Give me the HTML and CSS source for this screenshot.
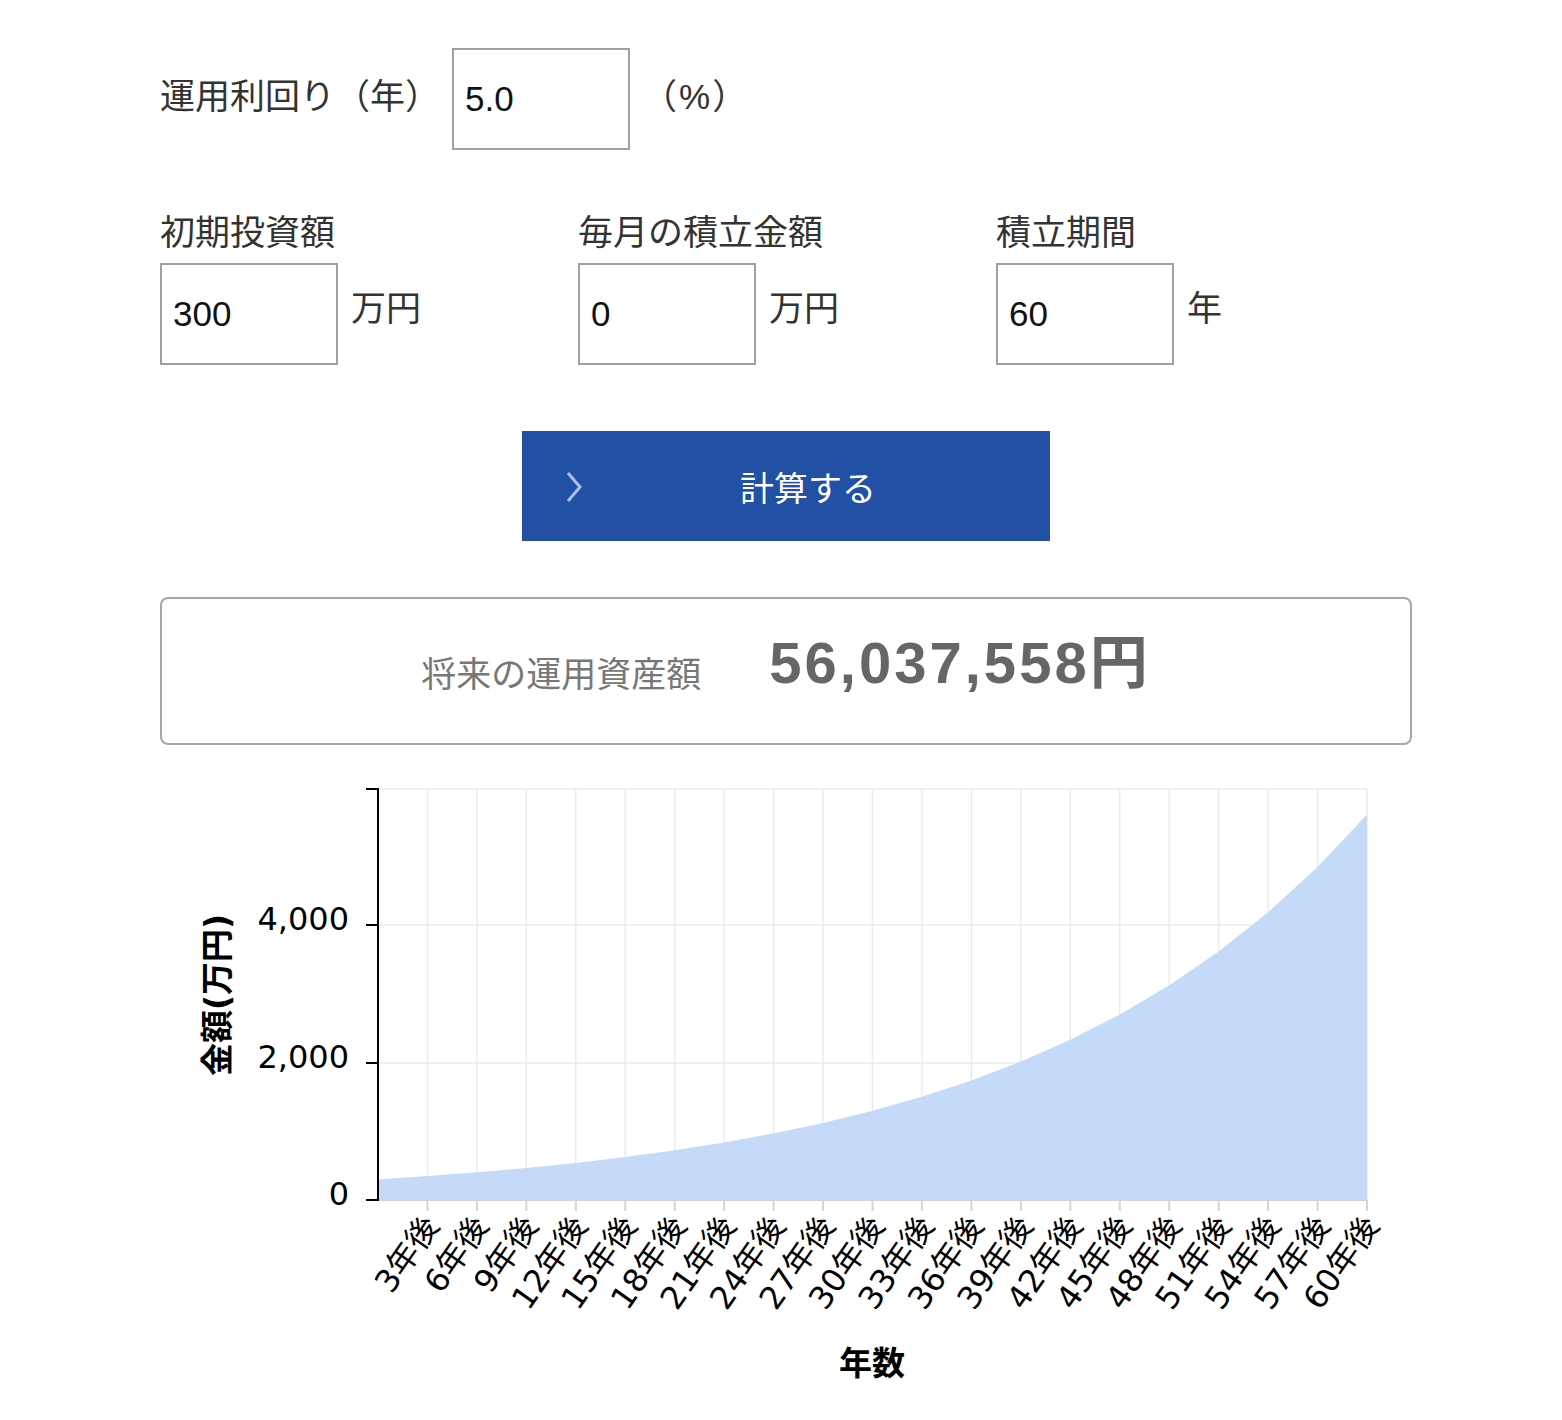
FILE: index.html
```html
<!DOCTYPE html>
<html lang="ja">
  <head>
    <meta charset="UTF-8" />
    <meta name="viewport" content="width=device-width, initial-scale=1.0" />
    <title>積立シミュレーション</title>
    <link rel="stylesheet" href="styles.css">
  </head>

  <body>
    <main class="simulator">
      <div class="rate-row">
        <label class="field-label" for="rate">運用利回り（年）</label>
        <input class="num-input" id="rate" type="text" value="5.0">
        <span class="unit unit-rate">（%）</span>
      </div>

      <div class="fields">
        <div class="field">
          <label class="field-label" for="initial">初期投資額</label>
          <div class="field-body">
            <input class="num-input" id="initial" type="text" value="300">
            <span class="unit">万円</span>
          </div>
        </div>
        <div class="field">
          <label class="field-label" for="monthly">毎月の積立金額</label>
          <div class="field-body">
            <input class="num-input" id="monthly" type="text" value="0">
            <span class="unit">万円</span>
          </div>
        </div>
        <div class="field">
          <label class="field-label" for="years">積立期間</label>
          <div class="field-body">
            <input class="num-input" id="years" type="text" value="60">
            <span class="unit">年</span>
          </div>
        </div>
      </div>

      <div class="actions">
        <button class="calc-btn" type="button">
          <svg class="calc-chevron" width="18" height="32" viewBox="0 0 18 32">
            <path d="M3 2 L15 16 L3 30" fill="none" stroke="currentColor" stroke-width="3" />
          </svg>
          計算する
        </button>
      </div>

      <div class="result">
        <span class="result-label">将来の運用資産額</span>
        <span class="result-value">56,037,558円</span>
      </div>

      <!-- chart: viewBox uses page coordinates -->
      <svg class="chart" width="1252" height="640" viewBox="160 770 1252 640">
        <g class="grid">
          <line x1="378" y1="789" x2="1367" y2="789" />
          <line x1="378" y1="925" x2="1367" y2="925" />
          <line x1="378" y1="1063" x2="1367" y2="1063" />
          <line x1="427.45" y1="789" x2="427.45" y2="1200" />
          <line x1="476.9" y1="789" x2="476.9" y2="1200" />
          <line x1="526.35" y1="789" x2="526.35" y2="1200" />
          <line x1="575.8" y1="789" x2="575.8" y2="1200" />
          <line x1="625.25" y1="789" x2="625.25" y2="1200" />
          <line x1="674.7" y1="789" x2="674.7" y2="1200" />
          <line x1="724.15" y1="789" x2="724.15" y2="1200" />
          <line x1="773.6" y1="789" x2="773.6" y2="1200" />
          <line x1="823.05" y1="789" x2="823.05" y2="1200" />
          <line x1="872.5" y1="789" x2="872.5" y2="1200" />
          <line x1="921.95" y1="789" x2="921.95" y2="1200" />
          <line x1="971.4" y1="789" x2="971.4" y2="1200" />
          <line x1="1020.85" y1="789" x2="1020.85" y2="1200" />
          <line x1="1070.3" y1="789" x2="1070.3" y2="1200" />
          <line x1="1119.75" y1="789" x2="1119.75" y2="1200" />
          <line x1="1169.2" y1="789" x2="1169.2" y2="1200" />
          <line x1="1218.65" y1="789" x2="1218.65" y2="1200" />
          <line x1="1268.1" y1="789" x2="1268.1" y2="1200" />
          <line x1="1317.55" y1="789" x2="1317.55" y2="1200" />
          <line x1="1367" y1="789" x2="1367" y2="1200" />
        </g>

        <path class="area" d="M378,1200 L378,1179.4 L427.45,1176.1 L476.9,1172.3 L526.35,1168 L575.8,1162.9 L625.25,1157.1 L674.7,1150.3 L724.15,1142.5 L773.6,1133.4 L823.05,1122.9 L872.5,1110.8 L921.95,1096.7 L971.4,1080.5 L1020.85,1061.6 L1070.3,1039.8 L1119.75,1014.5 L1169.2,985.3 L1218.65,951.5 L1268.1,912.3 L1317.55,867 L1367,814.5 L1367,1200 Z" />

        <g class="x-axis">
          <line x1="378" y1="1200" x2="1367" y2="1200" />
          <line x1="427.45" y1="1200" x2="427.45" y2="1211" />
          <line x1="476.9" y1="1200" x2="476.9" y2="1211" />
          <line x1="526.35" y1="1200" x2="526.35" y2="1211" />
          <line x1="575.8" y1="1200" x2="575.8" y2="1211" />
          <line x1="625.25" y1="1200" x2="625.25" y2="1211" />
          <line x1="674.7" y1="1200" x2="674.7" y2="1211" />
          <line x1="724.15" y1="1200" x2="724.15" y2="1211" />
          <line x1="773.6" y1="1200" x2="773.6" y2="1211" />
          <line x1="823.05" y1="1200" x2="823.05" y2="1211" />
          <line x1="872.5" y1="1200" x2="872.5" y2="1211" />
          <line x1="921.95" y1="1200" x2="921.95" y2="1211" />
          <line x1="971.4" y1="1200" x2="971.4" y2="1211" />
          <line x1="1020.85" y1="1200" x2="1020.85" y2="1211" />
          <line x1="1070.3" y1="1200" x2="1070.3" y2="1211" />
          <line x1="1119.75" y1="1200" x2="1119.75" y2="1211" />
          <line x1="1169.2" y1="1200" x2="1169.2" y2="1211" />
          <line x1="1218.65" y1="1200" x2="1218.65" y2="1211" />
          <line x1="1268.1" y1="1200" x2="1268.1" y2="1211" />
          <line x1="1317.55" y1="1200" x2="1317.55" y2="1211" />
          <line x1="1367" y1="1200" x2="1367" y2="1211" />
        </g>

        <g class="x-labels">
          <text transform="translate(440,1226) rotate(-55)">3年後</text>
          <text transform="translate(489.5,1226) rotate(-55)">6年後</text>
          <text transform="translate(539,1226) rotate(-55)">9年後</text>
          <text transform="translate(588.5,1226) rotate(-55)">12年後</text>
          <text transform="translate(638,1226) rotate(-55)">15年後</text>
          <text transform="translate(687.5,1226) rotate(-55)">18年後</text>
          <text transform="translate(737,1226) rotate(-55)">21年後</text>
          <text transform="translate(786.5,1226) rotate(-55)">24年後</text>
          <text transform="translate(836,1226) rotate(-55)">27年後</text>
          <text transform="translate(885.5,1226) rotate(-55)">30年後</text>
          <text transform="translate(935,1226) rotate(-55)">33年後</text>
          <text transform="translate(984.5,1226) rotate(-55)">36年後</text>
          <text transform="translate(1034,1226) rotate(-55)">39年後</text>
          <text transform="translate(1083.5,1226) rotate(-55)">42年後</text>
          <text transform="translate(1133,1226) rotate(-55)">45年後</text>
          <text transform="translate(1182.5,1226) rotate(-55)">48年後</text>
          <text transform="translate(1232,1226) rotate(-55)">51年後</text>
          <text transform="translate(1281.5,1226) rotate(-55)">54年後</text>
          <text transform="translate(1331,1226) rotate(-55)">57年後</text>
          <text transform="translate(1380,1226) rotate(-55)">60年後</text>
        </g>

        <g class="y-axis">
          <path d="M366,789 H378 V1200 H366" />
          <line x1="366" y1="925" x2="378" y2="925" />
          <line x1="366" y1="1063" x2="378" y2="1063" />
        </g>

        <g class="y-labels">
          <text x="349" y="930">4,000</text>
          <text x="349" y="1068">2,000</text>
          <text x="349" y="1205">0</text>
        </g>

        <text class="axis-title" transform="translate(229,995) rotate(-90)">金額(万円)</text>
        <text class="axis-title" x="872" y="1375">年数</text>
      </svg>
    </main>
  </body>
</html>
```

FILE: styles.css
```css
* {
  margin: 0;
  padding: 0;
  box-sizing: border-box;
}
body {
  background: #fff;
  color: #333;
  font-family: "Liberation Sans", "Noto Sans CJK JP", sans-serif;
}

.simulator {
  width: 1252px;
  margin-left: 160px;
  padding-top: 48px;
}

.field-label {
  font-size: 35px;
  line-height: 40px;
  color: #333;
}

.num-input {
  width: 178px;
  height: 102px;
  padding: 0 11px;
  border: 2px solid #a0a0a0;
  border-radius: 0;
  background: #fff;
  color: #111;
  font-family: "Liberation Sans", sans-serif;
  font-size: 35px;
  outline: none;
}

.unit {
  font-size: 35px;
  line-height: 40px;
  color: #333;
}

/* rate row */
.rate-row {
  display: flex;
  align-items: center;
  gap: 12px;
}
.rate-row .field-label {
  margin-top: -4px;
}
.unit-rate {
  letter-spacing: 2px;
  margin-top: -4px;
}

/* three fields */
.fields {
  display: grid;
  grid-template-columns: 418px 418px auto;
  margin-top: 63px;
}
.field .field-label {
  display: block;
  margin-bottom: 10px;
}
.field-body {
  display: flex;
  align-items: flex-start;
  gap: 13px;
}
.field-body .unit {
  padding-top: 26px;
}

/* button */
.actions {
  display: flex;
  justify-content: center;
  margin-top: 66px;
}
.calc-btn {
  position: relative;
  width: 528px;
  height: 110px;
  padding-left: 44px;
  border: none;
  background: #2150a5;
  color: #fff;
  font-family: "Noto Sans CJK JP", sans-serif;
  font-size: 34px;
  cursor: pointer;
}
.calc-chevron {
  position: absolute;
  left: 43px;
  top: 40px;
  color: rgba(220, 230, 250, 0.75);
}

/* result */
.result {
  display: flex;
  align-items: center;
  justify-content: center;
  gap: 68px;
  height: 148px;
  margin-top: 56px;
  border: 2px solid #a6a6a6;
  border-radius: 8px;
}
.result-label {
  font-family: "Noto Sans CJK JP", sans-serif;
  font-size: 35px;
  color: #777;
}
.result-value {
  margin-bottom: 16px;
  font-family: "Liberation Sans", "Noto Sans CJK JP", sans-serif;
  font-size: 58px;
  font-weight: 700;
  letter-spacing: 3px;
  line-height: 1;
  color: #666;
}

/* chart */
.chart {
  display: block;
  margin-top: 25px;
  font-family: "DejaVu Sans", "Noto Sans CJK JP", sans-serif;
}
.grid line {
  stroke: #ebebeb;
  stroke-width: 1.5;
}
.area {
  fill: #c5daf8;
}
.x-axis line {
  stroke: #d4d4d4;
  stroke-width: 2;
}
.y-axis path,
.y-axis line {
  fill: none;
  stroke: #000;
  stroke-width: 2;
}
.x-labels text {
  font-size: 32px;
  text-anchor: end;
  fill: #000;
}
.y-labels text {
  font-size: 32px;
  text-anchor: end;
  fill: #000;
}
.axis-title {
  font-family: "DejaVu Sans", "Noto Sans CJK JP", sans-serif;
  font-size: 33px;
  font-weight: 700;
  text-anchor: middle;
  fill: #000;
}
```
